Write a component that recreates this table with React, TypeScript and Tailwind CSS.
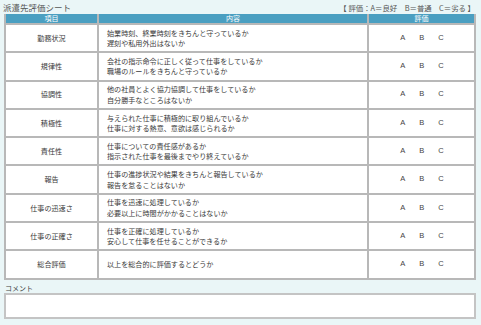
import React from 'react';

const rows: { item: string; lines: string[] }[] = [
  { item: '勤務状況', lines: ['始業時刻、終業時刻をきちんと守っているか', '遅刻や私用外出はないか'] },
  { item: '規律性', lines: ['会社の指示命令に正しく従って仕事をしているか', '職場のルールをきちんと守っているか'] },
  { item: '協調性', lines: ['他の社員とよく協力協調して仕事をしているか', '自分勝手なところはないか'] },
  { item: '積極性', lines: ['与えられた仕事に積極的に取り組んでいるか', '仕事に対する熱意、意欲は感じられるか'] },
  { item: '責任性', lines: ['仕事についての責任感があるか', '指示された仕事を最後までやり終えているか'] },
  { item: '報告', lines: ['仕事の進捗状況や結果をきちんと報告しているか', '報告を怠ることはないか'] },
  { item: '仕事の迅速さ', lines: ['仕事を迅速に処理しているか', '必要以上に時間がかかることはないか'] },
  { item: '仕事の正確さ', lines: ['仕事を正確に処理しているか', '安心して仕事を任せることができるか'] },
  { item: '総合評価', lines: ['以上を総合的に評価するとどうか'] },
];

export default function App() {
  return (
    <div
      className="w-[481px] h-[325px] bg-[#eaf6f7] text-[#3a3a3a] overflow-hidden"
      style={{ fontFamily: '"Noto Sans CJK JP", "Noto Sans", sans-serif' }}
    >
      <div className="flex items-end justify-between h-[14px] pl-[3px] pr-[6px] pb-[1px]">
        <span className="text-[8.5px] leading-[11px] text-[#555]">派遣先評価シート</span>
        <span className="text-[7.4px] leading-[10px] text-[#555]">【 評価：A＝良好　B＝普通　C＝劣る 】</span>
      </div>

      <table className="ml-[4px] w-[472px] table-fixed border-collapse bg-white">
        <colgroup>
          <col className="w-[93px]" />
          <col className="w-[270px]" />
          <col />
        </colgroup>
        <thead>
          <tr className="h-[10px] bg-[#4a9fc1] text-white text-[7px] leading-[9px]">
            <th className="border-2 border-[#b8b8b8] border-t-0 font-normal p-0">項目</th>
            <th className="border-2 border-[#b8b8b8] border-t-0 font-normal p-0">内容</th>
            <th className="border-2 border-[#b8b8b8] border-t-0 font-normal p-0">評価</th>
          </tr>
        </thead>
        <tbody>
          {rows.map((r) => (
            <tr key={r.item} className="h-[28.3px] text-[7.1px] leading-[10.5px]">
              <td className="border-2 border-[#b8b8b8] text-center p-0">{r.item}</td>
              <td className="border-2 border-[#b8b8b8] pl-[8px] p-0">
                {r.lines.map((l) => (
                  <div key={l}>{l}</div>
                ))}
              </td>
              <td className="border-2 border-[#b8b8b8] p-0">
                <div
                  className="flex justify-center gap-[14px] text-[7.5px] text-[#444] pl-[1px]"
                  style={{ fontFamily: '"Liberation Sans", sans-serif' }}
                >
                  <span>A</span>
                  <span>B</span>
                  <span>C</span>
                </div>
              </td>
            </tr>
          ))}
        </tbody>
      </table>

      <div className="pl-[5px] pt-[3px] text-[7px] leading-[10px] text-[#444]">コメント</div>
      <div className="ml-[4px] w-[472px] h-[26px] bg-white border-2 border-[#c4c4c4]" />
    </div>
  );
}
